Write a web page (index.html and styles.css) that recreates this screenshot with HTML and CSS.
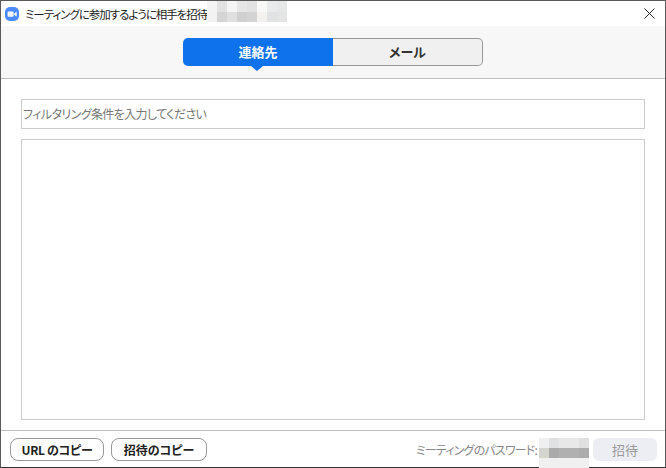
FILE: index.html
```html
<!DOCTYPE html>
<html lang="ja">
<head>
    <meta charset="UTF-8">
    <title>ミーティングに参加するように相手を招待</title>
    <link rel="stylesheet" href="styles.css">
</head>
<body>
    <div class="window">
        <div class="titlebar">
            <svg class="app-icon" width="14" height="14" viewBox="0 0 14 14">
                <rect width="14" height="14" rx="5" fill="#4a8cff"/>
                <rect x="2.6" y="4.4" width="6" height="5.4" rx="1.2" fill="#fff"/>
                <path d="M9.2 6.6 11.6 4.8V9.6L9.2 7.8Z" fill="#fff"/>
            </svg>
            <span class="title">ミーティングに参加するように相手を招待</span>
            <div class="mosaic title-mosaic">
                <i></i><i></i><i></i><i></i><i></i><i></i><i></i><i></i>
                <i></i><i></i><i></i><i></i><i></i><i></i><i></i><i></i>
            </div>
            <svg class="close" width="11" height="11" viewBox="0 0 11 11">
                <path d="M.5.5 10.5 10.5M10.5.5.5 10.5" stroke="#222" stroke-width="1" fill="none"/>
            </svg>
        </div>
        <div class="toolbar">
            <div class="tabs">
                <div class="tab active">連絡先</div>
                <div class="tab">メール</div>
            </div>
        </div>
        <div class="content">
            <div class="filter">フィルタリング条件を入力してください</div>
            <div class="list"></div>
        </div>
        <div class="footer">
            <button class="btn url-btn">URL のコピー</button>
            <button class="btn invite-copy-btn">招待のコピー</button>
            <span class="password">ミーティングのパスワード:</span>
            <div class="mosaic pass-mosaic">
                <i></i><i></i><i></i><i></i><i></i>
                <i></i><i></i><i></i><i></i><i></i>
                <i></i><i></i><i></i><i></i><i></i>
            </div>
            <button class="invite-btn">招待</button>
        </div>
    </div>
</body>
</html>
```

FILE: styles.css
```css
html, body {
    margin: 0;
    padding: 0;
}
body {
    width: 666px;
    height: 468px;
    overflow: hidden;
    font-family: "Noto Sans CJK JP", "Noto Sans", sans-serif;
    font-feature-settings: "palt";
    background: #fff;
}
.window {
    box-sizing: border-box;
    width: 666px;
    height: 468px;
    border: 1px solid #5a5a5a;
    border-bottom-color: #333;
    display: flex;
    flex-direction: column;
}
.titlebar {
    height: 25px;
    display: flex;
    align-items: center;
    padding-left: 4px;
    background: #fff;
    flex-shrink: 0;
}
.app-icon {
    margin-right: 6px;
}
.title {
    font-size: 11.5px;
    letter-spacing: -1.05px;
    color: #222;
    white-space: nowrap;
}
.mosaic i {
    display: block;
}
.title-mosaic {
    display: grid;
    grid-template-columns: repeat(8, 10px);
    grid-template-rows: 11px 10px;
    align-self: flex-start;
}
.title-mosaic i:nth-child(1) { background: #f4f4f4; }
.title-mosaic i:nth-child(2) { background: #e2e2e2; }
.title-mosaic i:nth-child(3) { background: #f5f5f5; }
.title-mosaic i:nth-child(4) { background: #e6e6e6; }
.title-mosaic i:nth-child(5) { background: #e2e2e2; }
.title-mosaic i:nth-child(6) { background: #f8f8f6; }
.title-mosaic i:nth-child(7) { background: #e8eaec; }
.title-mosaic i:nth-child(8) { background: #e6e8e8; }
.title-mosaic i:nth-child(9) { background: #f2f2f2; }
.title-mosaic i:nth-child(10) { background: #d4d4d4; }
.title-mosaic i:nth-child(11) { background: #e0e0e0; }
.title-mosaic i:nth-child(12) { background: #d0d0d0; }
.title-mosaic i:nth-child(13) { background: #d4d4d4; }
.title-mosaic i:nth-child(14) { background: #f4f2ee; }
.title-mosaic i:nth-child(15) { background: #e0e2e4; }
.title-mosaic i:nth-child(16) { background: #e4e4e4; }
.close {
    margin-left: auto;
    margin-right: 10px;
}
.toolbar {
    height: 40px;
    background: #f7f7f7;
    border-bottom: 1px solid #bdbdbd;
    display: flex;
    justify-content: center;
    padding-top: 12px;
    flex-shrink: 0;
}
.tabs {
    display: flex;
    height: 28px;
    width: 300px;
}
.tab {
    position: relative;
    width: 150px;
    box-sizing: border-box;
    text-align: center;
    font-size: 13px;
    font-weight: 700;
    line-height: 26px;
    color: #333;
    background: #f0f0f0;
    border: 1px solid #999;
    border-left: 0;
    border-radius: 0 5px 5px 0;
}
.tab.active {
    color: #fff;
    background: #0e72ed;
    border: 0;
    line-height: 28px;
    border-radius: 5px 0 0 5px;
}
.tab.active::after {
    content: "";
    position: absolute;
    left: 68px;
    top: 28px;
    border-left: 6px solid transparent;
    border-right: 6px solid transparent;
    border-top: 5px solid #0e72ed;
}
.content {
    flex: 1;
    display: flex;
    flex-direction: column;
    gap: 10px;
    padding: 20px 20px 10px;
    min-height: 0;
}
.filter {
    box-sizing: border-box;
    height: 30px;
    border: 1px solid #ccc;
    font-size: 12px;
    letter-spacing: -0.6px;
    line-height: 28px;
    color: #777;
    padding-left: 1px;
}
.list {
    flex: 1;
    border: 1px solid #ccc;
}
.footer {
    height: 37px;
    flex-shrink: 0;
    border-top: 1px solid #bdbdbd;
    display: flex;
    align-items: flex-start;
    padding: 7px 8px 0 9px;
    box-sizing: border-box;
}
.btn {
    height: 23px;
    padding: 0;
    border: 1px solid #999;
    border-radius: 8px;
    background: #fff;
    color: #222;
    font-family: inherit;
    font-feature-settings: inherit;
    font-size: 12px;
    font-weight: 700;
    line-height: 20px;
}
.url-btn {
    width: 94px;
    margin-right: 7px;
    letter-spacing: -0.3px;
}
.invite-copy-btn {
    width: 96px;
}
.password {
    margin-left: auto;
    font-size: 12px;
    letter-spacing: -0.8px;
    line-height: 23px;
    color: #888;
    white-space: nowrap;
}
.pass-mosaic {
    display: grid;
    grid-template-columns: repeat(5, 10px);
    grid-template-rows: repeat(3, 10px);
    margin: 0 4px 0 2px;
}
.pass-mosaic i:nth-child(1) { background: #f0f0f0; }
.pass-mosaic i:nth-child(2) { background: #dfe1e3; }
.pass-mosaic i:nth-child(3) { background: #e8e8e8; }
.pass-mosaic i:nth-child(4) { background: #e8e8e8; }
.pass-mosaic i:nth-child(5) { background: #e0e0e0; }
.pass-mosaic i:nth-child(6) { background: #d5d5d0; }
.pass-mosaic i:nth-child(7) { background: #aaa; }
.pass-mosaic i:nth-child(8) { background: #b0b0b0; }
.pass-mosaic i:nth-child(9) { background: #b0b0b0; }
.pass-mosaic i:nth-child(10) { background: #acacac; }
.pass-mosaic i:nth-child(n+11) { background: #f0f0f0; }
.invite-btn {
    width: 64px;
    height: 23px;
    padding: 0;
    border: 0;
    border-radius: 6px;
    background: #edeef4;
    color: #999;
    font-family: inherit;
    font-size: 13px;
}
```
